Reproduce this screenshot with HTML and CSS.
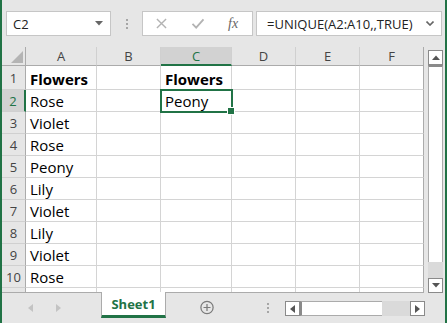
FILE: index.html
```html
<!DOCTYPE html>
<html>
<head>
  <link rel="stylesheet" href="styles.css">
</head>
<body>
  <div class="app">
    <!-- Top: name box and formula bar -->
    <div class="toolbar">
      <div class="namebox">
        <span>C2</span>
        <svg class="nb-arrow" viewBox="0 0 8 5"><path d="M0 0h8L4 4.5z"/></svg>
      </div>
      <div class="sep"><i></i><i></i><i></i></div>
      <div class="fbtns">
        <svg class="fb-icon" viewBox="0 0 12 12"><path d="M1 1l10 10M11 1L1 11"/></svg>
        <svg class="fb-icon" viewBox="0 0 14 12"><path d="M1 6.5l4 4L13 1.5"/></svg>
        <span class="fx">fx</span>
      </div>
      <div class="fbox">
        <span>=UNIQUE(A2:A10,,TRUE)</span>
        <svg class="fb-chev" viewBox="0 0 8 5"><path d="M0.5 0.5l3.5 3.5 3.5-3.5"/></svg>
      </div>
    </div>

    <!-- Middle: sheet grid and vertical scrollbar -->
    <div class="main">
      <div class="sheet">
        <div class="hd corner"><svg viewBox="0 0 12 12"><path d="M12 0v12H0z"/></svg></div>
        <div class="hd col">A</div>
        <div class="hd col">B</div>
        <div class="hd col sel">C</div>
        <div class="hd col">D</div>
        <div class="hd col">E</div>
        <div class="hd col">F</div>

        <div class="hd row">1</div>
        <div class="cell bold">Flowers</div><div class="cell"></div><div class="cell bold">Flowers</div><div class="cell"></div><div class="cell"></div><div class="cell"></div>

        <div class="hd row sel">2</div>
        <div class="cell">Rose</div><div class="cell"></div><div class="cell active">Peony</div><div class="cell"></div><div class="cell"></div><div class="cell"></div>

        <div class="hd row">3</div>
        <div class="cell">Violet</div><div class="cell"></div><div class="cell"></div><div class="cell"></div><div class="cell"></div><div class="cell"></div>

        <div class="hd row">4</div>
        <div class="cell">Rose</div><div class="cell"></div><div class="cell"></div><div class="cell"></div><div class="cell"></div><div class="cell"></div>

        <div class="hd row">5</div>
        <div class="cell">Peony</div><div class="cell"></div><div class="cell"></div><div class="cell"></div><div class="cell"></div><div class="cell"></div>

        <div class="hd row">6</div>
        <div class="cell">Lily</div><div class="cell"></div><div class="cell"></div><div class="cell"></div><div class="cell"></div><div class="cell"></div>

        <div class="hd row">7</div>
        <div class="cell">Violet</div><div class="cell"></div><div class="cell"></div><div class="cell"></div><div class="cell"></div><div class="cell"></div>

        <div class="hd row">8</div>
        <div class="cell">Lily</div><div class="cell"></div><div class="cell"></div><div class="cell"></div><div class="cell"></div><div class="cell"></div>

        <div class="hd row">9</div>
        <div class="cell">Violet</div><div class="cell"></div><div class="cell"></div><div class="cell"></div><div class="cell"></div><div class="cell"></div>

        <div class="hd row">10</div>
        <div class="cell">Rose</div><div class="cell"></div><div class="cell"></div><div class="cell"></div><div class="cell"></div><div class="cell"></div>

        <div class="hd row"></div>
        <div class="cell"></div><div class="cell"></div><div class="cell"></div><div class="cell"></div><div class="cell"></div><div class="cell"></div>
      </div>

      <div class="vscroll">
        <div class="sbtn"><svg viewBox="0 0 8 5"><path d="M0 5h8L4 0.5z"/></svg></div>
        <div class="vthumb"></div>
        <div class="vtrack"></div>
        <div class="sbtn"><svg viewBox="0 0 8 5"><path d="M0 0h8L4 4.5z"/></svg></div>
      </div>
    </div>

    <!-- Bottom: sheet tabs and horizontal scrollbar -->
    <div class="tabbar">
      <div class="nav">
        <svg viewBox="0 0 5 8"><path d="M5 0v8L0 4z"/></svg>
        <svg viewBox="0 0 5 8"><path d="M0 0v8l5-4z"/></svg>
      </div>
      <div class="tab">Sheet1</div>
      <div class="add">
        <svg viewBox="0 0 16 16"><circle cx="8" cy="8" r="7"/><path d="M8 4v8M4 8h8"/></svg>
      </div>
      <div class="spacer"></div>
      <div class="hdots"><i></i><i></i><i></i></div>
      <div class="hscroll">
        <div class="sbtn"><svg viewBox="0 0 5 8"><path d="M5 0v8L0 4z"/></svg></div>
        <div class="hthumb"></div>
        <div class="htrack"></div>
        <div class="sbtn"><svg viewBox="0 0 5 8"><path d="M0 0v8l5-4z"/></svg></div>
      </div>
    </div>
  </div>
</body>
</html>
```

FILE: styles.css
```css
* { box-sizing: border-box; }
body {
  margin: 0;
  font-family: "Open Sans", "Noto Sans", sans-serif;
}
.app {
  width: 447px;
  height: 323px;
  background: #e6e6e6;
  border-left: 2px solid #217346;
  border-right: 2px solid #217346;
  display: flex;
  flex-direction: column;
  overflow: hidden;
}

/* Toolbar */
.toolbar {
  height: 47px;
  display: flex;
  align-items: flex-start;
  padding: 11px 3px 0 4px;
  flex-shrink: 0;
}
.namebox {
  width: 105px;
  height: 25px;
  background: #fff;
  border: 1px solid #c6c6c6;
  display: flex;
  align-items: center;
  justify-content: space-between;
  padding: 0 7px 0 6px;
  font-size: 13px;
  color: #222;
}
.nb-arrow {
  width: 8px;
  height: 5px;
  fill: #666;
}
.sep {
  width: 31px;
  height: 25px;
  display: flex;
  flex-direction: column;
  align-items: center;
  justify-content: center;
  gap: 2px;
}
.sep i, .hdots i {
  display: block;
  width: 2px;
  height: 2px;
  background: #a6a6a6;
}
.fbtns {
  width: 111px;
  height: 25px;
  background: #fff;
  border: 1px solid #c6c6c6;
  display: flex;
  align-items: center;
  padding-left: 13px;
}
.fb-icon {
  width: 11px;
  height: 11px;
  fill: none;
  stroke: #b3b3b3;
  stroke-width: 1.5;
  margin-right: 24px;
}
.fb-icon + .fb-icon {
  width: 14px;
  stroke-width: 2;
  margin-right: 23px;
}
.fx {
  font-family: "Liberation Serif", serif;
  font-style: italic;
  font-size: 14px;
  color: #666;
}
.fbox {
  flex: 1;
  height: 25px;
  margin-left: 3px;
  background: #fff;
  border: 1px solid #c6c6c6;
  display: flex;
  align-items: center;
  justify-content: space-between;
  padding: 0 7px 0 10px;
  font-size: 13px;
  color: #222;
}
.fb-chev {
  width: 8px;
  height: 5px;
  fill: none;
  stroke: #666;
  stroke-width: 1.6;
}

/* Grid */
.main {
  display: flex;
  height: 246px;
  flex-shrink: 0;
}
.sheet {
  display: grid;
  grid-template-columns: 24px 71px 64px 71px 64px 64px 64px;
  grid-template-rows: 19px 24px repeat(9, 22px) 5px;
  background: #fff;
  border-bottom: 1px solid #ababab;
  overflow: hidden;
}
.hd {
  background: #e6e6e6;
  color: #444;
  font-size: 13px;
  display: flex;
  align-items: center;
  justify-content: center;
}
.hd.col {
  border-right: 1px solid #d0d0d0;
  border-bottom: 1px solid #ababab;
}
.hd.col:nth-child(7) {
  border-right-color: #ababab;
}
.hd.row {
  border-right: 1px solid #ababab;
  border-bottom: 1px solid #d0d0d0;
}
.hd.corner {
  border-right: 1px solid #ababab;
  border-bottom: 1px solid #ababab;
  align-items: flex-end;
  justify-content: flex-end;
  padding: 0 2px 2px 0;
}
.hd.corner svg {
  width: 12px;
  height: 12px;
  fill: #b4b4b4;
}
.hd.col.sel {
  background: #d2d2d2;
  color: #217346;
  border-bottom: 2px solid #217346;
}
.hd.row.sel {
  background: #d2d2d2;
  color: #217346;
  border-right: 2px solid #217346;
}
.cell {
  border-right: 1px solid #d4d4d4;
  border-bottom: 1px solid #d4d4d4;
  display: flex;
  align-items: flex-end;
  padding: 0 0 1px 4px;
  font-size: 15px;
  line-height: 17px;
  color: #000;
  white-space: nowrap;
}
.cell:nth-child(7n) {
  border-right-color: #ababab;
}
.cell.bold {
  font-weight: bold;
}
.cell.active {
  position: relative;
}
.cell.active::after {
  content: "";
  position: absolute;
  left: -1px;
  top: -1px;
  right: -2px;
  bottom: -2px;
  border: 2px solid #217346;
}
.cell.active::before {
  content: "";
  position: absolute;
  right: -4px;
  bottom: -4px;
  width: 6px;
  height: 6px;
  background: #217346;
  border: 1px solid #fff;
  z-index: 1;
}

/* Scrollbars */
.vscroll {
  width: 21px;
  display: flex;
  flex-direction: column;
  padding: 3px 2px 0 4px;
  background: #e6e6e6;
}
.sbtn {
  width: 15px;
  height: 15px;
  background: #fff;
  border: 1px solid #8a8a8a;
  display: flex;
  align-items: center;
  justify-content: center;
  flex-shrink: 0;
}
.vscroll .sbtn svg {
  width: 8px;
  height: 5px;
  fill: #555;
}
.vthumb {
  height: 197px;
  background: #fff;
  border-left: 1px solid #ababab;
  border-right: 1px solid #ababab;
  border-top: 2px solid #8a8a8a;
}
.vtrack {
  flex: 1;
  background: #dadada;
}

/* Tab bar */
.tabbar {
  flex: 1;
  display: flex;
  align-items: flex-start;
}
.nav {
  width: 99px;
  height: 29px;
  display: flex;
  align-items: center;
  padding-left: 26px;
  gap: 23px;
}
.nav svg {
  width: 5px;
  height: 8px;
  fill: #c3c3c3;
}
.tab {
  width: 65px;
  height: 26px;
  background: #fff;
  border-left: 1px solid #ababab;
  border-right: 1px solid #ababab;
  border-bottom: 3px solid #217346;
  margin-top: -1px;
  display: flex;
  align-items: center;
  justify-content: center;
  color: #217346;
  font-weight: bold;
  font-size: 13px;
}
.add {
  width: 48px;
  height: 29px;
  display: flex;
  align-items: center;
  padding-left: 34px;
}
.add svg {
  width: 15px;
  height: 15px;
  fill: none;
  stroke: #7a7a7a;
  stroke-width: 1.4;
}
.spacer {
  flex: 1;
}
.hdots {
  width: 2px;
  height: 29px;
  margin-right: 16px;
  display: flex;
  flex-direction: column;
  justify-content: center;
  gap: 2px;
}
.hscroll {
  width: 140px;
  height: 15px;
  margin: 8px 20px 0 0;
  display: flex;
  background: #dadada;
}
.hscroll .sbtn svg {
  width: 5px;
  height: 8px;
  fill: #555;
}
.hthumb {
  width: 82px;
  background: #fff;
  border-top: 1px solid #ababab;
  border-bottom: 1px solid #ababab;
  border-left: 2px solid #8a8a8a;
}
.htrack {
  flex: 1;
}
```
